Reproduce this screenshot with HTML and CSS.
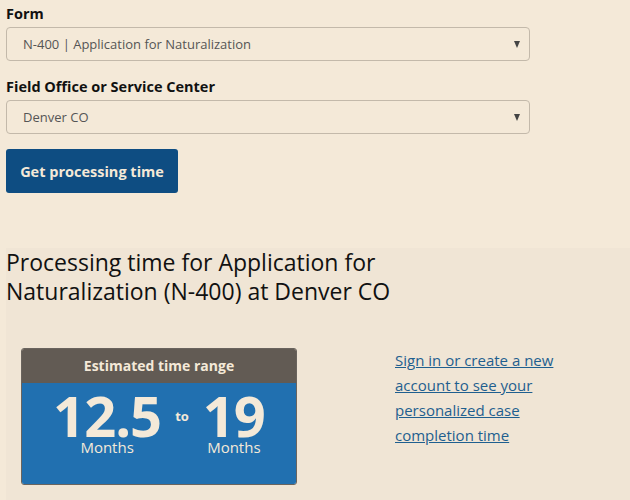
FILE: index.html
```html
<!DOCTYPE html>
<html>
<head>
<meta charset="utf-8">
<link rel="stylesheet" href="styles.css">
</head>
<body>
<form class="finder">
  <label class="field-label">Form</label>
  <div class="select">
    <span class="select-text">N-400 | Application for Naturalization</span>
    <span class="arrow"></span>
  </div>
  <label class="field-label">Field Office or Service Center</label>
  <div class="select">
    <span class="select-text">Denver CO</span>
    <span class="arrow"></span>
  </div>
  <button type="button" class="btn">Get processing time</button>
</form>
<section class="results">
  <h2 class="results-title">Processing time for Application for<br>Naturalization (N-400) at Denver CO</h2>
  <div class="results-row">
    <div class="card">
      <div class="card-head">Estimated time range</div>
      <div class="card-body">
        <div class="range">
          <div class="num-col"><span class="num">12.5</span><span class="unit">Months</span></div>
          <span class="to">to</span>
          <div class="num-col"><span class="num">19</span><span class="unit">Months</span></div>
        </div>
      </div>
    </div>
    <a class="signin" href="#">Sign in or create a new account to see your personalized case completion time</a>
  </div>
</section>
</body>
</html>
```
FILE: styles.css
```css
html, body {
  margin: 0;
  padding: 0;
  background: #f4e9d8;
  font-family: "Open Sans", "Liberation Sans", sans-serif;
  color: #111;
}
.finder {
  padding: 4px 6px 0 6px;
  display: flex;
  flex-direction: column;
  align-items: flex-start;
}
.field-label {
  font-weight: 700;
  font-size: 14.5px;
  line-height: 20px;
  margin-bottom: 3px;
}
.select {
  box-sizing: border-box;
  width: 524px;
  height: 34px;
  border: 1px solid #c3b9aa;
  border-radius: 4px;
  display: flex;
  align-items: center;
  justify-content: space-between;
  padding: 0 9px 0 16px;
  margin-bottom: 16px;
}
.select-text {
  font-size: 13px;
  color: #555;
}
.arrow {
  width: 0;
  height: 0;
  border-left: 3.5px solid transparent;
  border-right: 3.5px solid transparent;
  border-top: 7px solid #444;
}
.btn {
  margin-top: -1px;
  background: #0e4d82;
  color: #f4e9d8;
  border: 0;
  border-radius: 3px;
  width: 172px;
  height: 44px;
  font-family: inherit;
  font-weight: 700;
  font-size: 14.5px;
  padding: 0;
}
.results {
  margin: 55px 0 0 6px;
  background: #f0e5d5;
  padding: 0 0 20px 0;
}
.results-title {
  margin: 0;
  font-size: 23px;
  font-weight: 400;
  line-height: 29px;
  color: #111;
}
.results-row {
  display: flex;
  align-items: flex-start;
  margin-top: 42px;
  padding-left: 15px;
}
.card {
  width: 274px;
  border-radius: 3px;
  overflow: hidden;
  border: 1px solid #6a645e;
}
.card-head {
  background: #625b54;
  color: #f4e9d8;
  text-align: center;
  font-weight: 700;
  font-size: 14px;
  height: 34px;
  line-height: 34px;
}
.card-body {
  background: #2170b0;
  height: 101px;
  color: #f4e9d8;
}
.range {
  display: flex;
  justify-content: center;
  align-items: flex-start;
  padding-top: 10px;
}
.num-col {
  display: flex;
  flex-direction: column;
  align-items: center;
}
.num {
  font-size: 56px;
  font-weight: 700;
  line-height: 44px;
  letter-spacing: -1px;
}
.unit {
  font-size: 15px;
  line-height: 16px;
  margin-top: 2px;
}
.to {
  font-size: 13px;
  font-weight: 700;
  margin: 14px 14px 0;
}
.signin {
  margin-left: 98px;
  margin-top: 0;
  width: 175px;
  font-size: 15px;
  line-height: 25px;
  color: #1f5f8f;
}
```
